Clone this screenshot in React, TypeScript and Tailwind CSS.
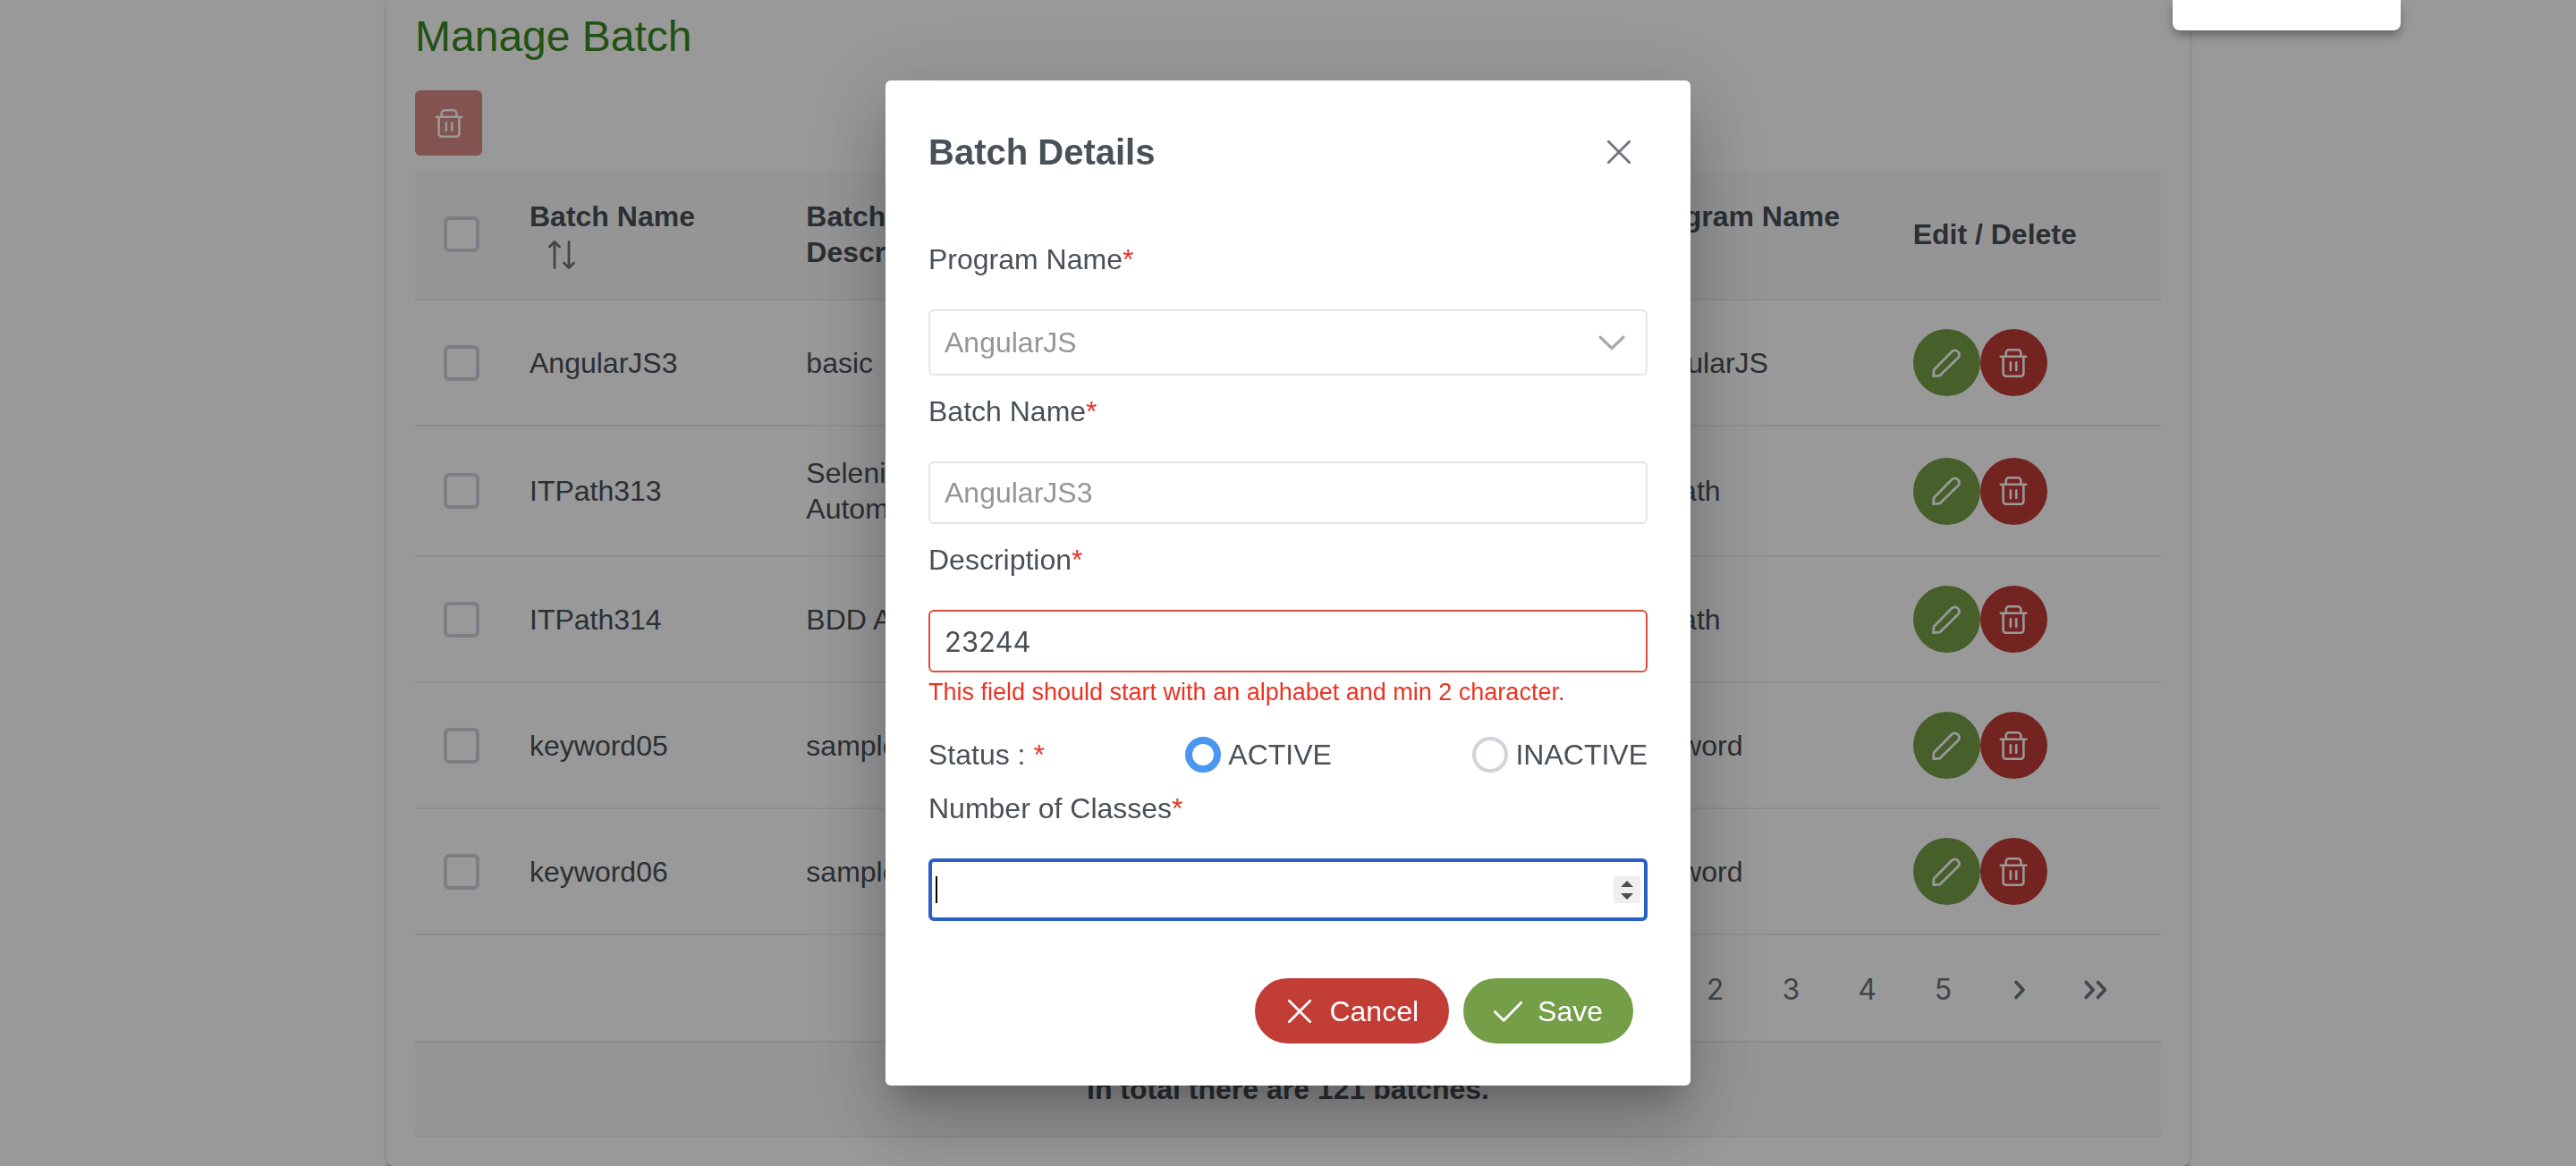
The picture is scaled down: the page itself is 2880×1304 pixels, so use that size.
import type { ReactNode } from "react";

type Row = { name: string; description: string; status: string; classes: number; program: string };

const rows: Row[] = [
  { name: "AngularJS3", description: "basic", status: "ACTIVE", classes: 6, program: "AngularJS" },
  { name: "ITPath313", description: "Selenium Automation", status: "ACTIVE", classes: 6, program: "ITPath" },
  { name: "ITPath314", description: "BDD Automation", status: "ACTIVE", classes: 6, program: "ITPath" },
  { name: "keyword05", description: "sample", status: "ACTIVE", classes: 5, program: "keyword" },
  { name: "keyword06", description: "sample", status: "ACTIVE", classes: 5, program: "keyword" },
];

function Icon({ children, width = 3 }: { children: ReactNode; width?: number }) {
  return (
    <svg
      aria-hidden="true"
      viewBox="0 0 32 32"
      className="size-8 shrink-0"
      fill="none"
      stroke="currentColor"
      strokeWidth={width}
      strokeLinecap="round"
      strokeLinejoin="round"
    >
      {children}
    </svg>
  );
}

const TrashIcon = () => (
  <Icon width={2.6}>
    <path d="M1.7 8.7H30.3M7.7 8.2V4.7a3.4 3.4 0 0 1 3.4-3.4H21a3.4 3.4 0 0 1 3.4 3.4v3.5M4.6 9v18.6A3.1 3.1 0 0 0 7.7 30.7H24.3a3.1 3.1 0 0 0 3.1-3.1V9M12.9 15.4v8.6M19.2 15.4v8.6" />
  </Icon>
);

const PencilIcon = () => (
  <Icon width={2.7}>
    <path d="M1.6 30.6L2 23.8L22.6 2.8A5 5 0 0 1 29.5 9.8L8.6 30.2Z" />
  </Icon>
);

const SortIcon = () => (
  <Icon width={2.8}>
    <path d="M8 30.5V1.5M2.4 7L8 1.5L13.6 7M24 1.5V30.5M18.4 25L24 30.5L29.6 25" />
  </Icon>
);

const CloseIcon = () => (
  <Icon width={2.8}>
    <path d="M4.3 4.3L27.7 27.7M27.7 4.3L4.3 27.7" />
  </Icon>
);

const CheckIcon = () => (
  <Icon width={2.8}>
    <path d="M1.3 16.6L11.2 26.3L30.7 6.2" />
  </Icon>
);

const ChevronDown = () => (
  <Icon width={3.2}>
    <path d="M3 10L16 22.5L29 10" />
  </Icon>
);

function Checkbox({ label }: { label: string }) {
  return (
    <input
      type="checkbox"
      aria-label={label}
      className="block size-10 max-w-none appearance-none rounded-md border-4 border-[#ced4da] bg-white"
    />
  );
}

function HeadCell({ children, sortable = false }: { children: ReactNode; sortable?: boolean }) {
  return (
    <th scope="col" className="px-8 text-left font-bold">
      {children}
      {sortable && (
        <button type="button" aria-label="Sort" className="ml-5 flex h-10 items-center pt-1.5 text-[#6c757d]">
          <SortIcon />
        </button>
      )}
    </th>
  );
}

function PageButton({ label, children }: { label: string; children: ReactNode }) {
  return (
    <button
      type="button"
      aria-label={label}
      className="flex h-[75px] w-[75px] items-center justify-center rounded-md font-[Inter,sans-serif] text-[32px] text-[#6c757d]"
    >
      {children}
    </button>
  );
}

function Label({ htmlFor, children }: { htmlFor: string; children: ReactNode }) {
  return (
    <label htmlFor={htmlFor} className="mt-5 mb-9 block">
      {children}
      <span className="text-[#eb3323]">*</span>
    </label>
  );
}

function Radio({ label, checked = false }: { label: string; checked?: boolean }) {
  return (
    <label className="flex items-center gap-2">
      <input
        type="radio"
        name="status"
        defaultChecked={checked}
        className="size-10 appearance-none rounded-full border-4 border-[#ced4da] bg-white checked:border-8 checked:border-[#4b96f0]"
      />
      {label}
    </label>
  );
}

function ManageBatch() {
  return (
    <main className="mx-auto w-[70%] rounded-b-lg bg-white px-8 pt-[17px] pb-8 shadow-[0_4px_2px_-2px_rgba(0,0,0,0.2),0_2px_2px_rgba(0,0,0,0.14),0_2px_6px_rgba(0,0,0,0.12)]">
      <h1 className="text-[48px] leading-[48px] text-[#3a8722]">Manage Batch</h1>
      <button
        type="button"
        disabled
        aria-label="Delete selected batches"
        className="mt-9 mb-4 flex h-[73px] w-[75px] items-center justify-center rounded-md bg-[#c23d36] text-white opacity-60"
      >
        <TrashIcon />
      </button>
      <table className="w-full table-fixed border-collapse">
        <thead className="bg-[#f8f9fa]">
          <tr className="h-[145px] border-b-2 border-[#e9ecef]">
            <th scope="col" className="w-24 pl-8">
              <Checkbox label="Select all" />
            </th>
            <HeadCell sortable>Batch Name</HeadCell>
            <HeadCell>Batch Description</HeadCell>
            <HeadCell sortable>Batch Status</HeadCell>
            <HeadCell sortable>No. of Classes</HeadCell>
            <HeadCell sortable>Program Name</HeadCell>
            <HeadCell>Edit / Delete</HeadCell>
          </tr>
        </thead>
        <tbody>
          {rows.map((row) => (
            <tr key={row.name} className="h-[141px] border-b-2 border-[#e9ecef]">
              <td className="pl-8">
                <Checkbox label={`Select ${row.name}`} />
              </td>
              <td className="px-8 py-8">{row.name}</td>
              <td className="px-8 py-8">{row.description}</td>
              <td className="px-8 py-8">{row.status}</td>
              <td className="px-8 py-8">{row.classes}</td>
              <td className="px-8 py-8">{row.program}</td>
              <td className="px-8">
                <div className="flex">
                  <button
                    type="button"
                    aria-label={`Edit ${row.name}`}
                    className="flex size-[75px] items-center justify-center rounded-full bg-[#759e49] text-white"
                  >
                    <PencilIcon />
                  </button>
                  <button
                    type="button"
                    aria-label={`Delete ${row.name}`}
                    className="flex size-[75px] items-center justify-center rounded-full bg-[#c23d36] text-white"
                  >
                    <TrashIcon />
                  </button>
                </div>
              </td>
            </tr>
          ))}
        </tbody>
      </table>
      <nav
        aria-label="Pages"
        className="flex h-[120px] items-center justify-end gap-[10px] border-b-2 border-[#e9ecef] pt-1 pr-9"
      >
        <PageButton label="Page 1">1</PageButton>
        <PageButton label="Page 2">2</PageButton>
        <PageButton label="Page 3">3</PageButton>
        <PageButton label="Page 4">4</PageButton>
        <PageButton label="Page 5">5</PageButton>
        <PageButton label="Next page">
          <Icon width={3.6}>
            <path d="M12 7.5L20 16L12 24.5" />
          </Icon>
        </PageButton>
        <PageButton label="Last page">
          <Icon width={3.6}>
            <path d="M5.2 7.5L13.2 16L5.2 24.5M18.4 7.5L26.4 16L18.4 24.5" />
          </Icon>
        </PageButton>
      </nav>
      <div className="border-b-2 border-[#e9ecef] bg-[#f8f9fa] py-8 text-center font-bold">
        In total there are 121 batches.
      </div>
    </main>
  );
}

function BatchDialog() {
  return (
    <div
      role="dialog"
      aria-modal="true"
      aria-labelledby="dialog-title"
      className="w-[900px] rounded-md bg-white shadow-[0_22px_30px_-14px_rgba(0,0,0,0.2),0_48px_76px_6px_rgba(0,0,0,0.14),0_18px_92px_16px_rgba(0,0,0,0.12)]"
    >
      <header className="flex items-center justify-between p-12">
        <h2 id="dialog-title" className="text-[40px] leading-[48px] font-bold">
          Batch Details
        </h2>
        <button type="button" aria-label="Close" className="flex size-16 items-center justify-center text-[#6c757d]">
          <CloseIcon />
        </button>
      </header>
      <form className="px-12">
        <Label htmlFor="program">Program Name</Label>
        <div className="relative">
          <select
            id="program"
            disabled
            className="block h-[74px] w-full appearance-none rounded-md border-2 border-[#e2e5e9] bg-white px-4 text-[#92969a] opacity-100"
          >
            <option>AngularJS</option>
          </select>
          <span className="pointer-events-none absolute inset-y-0 right-6 flex items-center text-[#a6abb0]">
            <ChevronDown />
          </span>
        </div>
        <Label htmlFor="batch">Batch Name</Label>
        <input
          id="batch"
          disabled
          defaultValue="AngularJS3"
          className="block h-[70px] w-full rounded-md border-2 border-[#e2e5e9] bg-white px-4 text-[#92969a]"
        />
        <Label htmlFor="description">Description</Label>
        <input
          id="description"
          defaultValue="23244"
          aria-invalid="true"
          aria-describedby="description-error"
          className="block h-[70px] w-full rounded-md border-2 border-[#dc5040] bg-white px-4 font-[Inter,sans-serif] text-[31px]"
        />
        <p id="description-error" className="mt-1 text-[27px] leading-9 text-[#eb3323]">
          This field should start with an alphabet and min 2 character.
        </p>
        <div role="radiogroup" aria-label="Status" className="mt-8 flex h-10 items-center justify-between">
          <span>
            Status : <span className="text-[#eb3323]">*</span>
          </span>
          <Radio label="ACTIVE" checked />
          <Radio label="INACTIVE" />
        </div>
        <Label htmlFor="classes">Number of Classes</Label>
        <div className="relative">
          <input
            id="classes"
            inputMode="numeric"
            className="block h-[70px] w-full rounded-md border-4 border-[#2860c8] bg-white px-1 caret-transparent outline-none"
          />
          <span className="pointer-events-none absolute inset-y-5 left-2 w-[2px] bg-black" />
          <span className="pointer-events-none absolute inset-y-0 right-2 flex items-center">
            <svg aria-hidden="true" viewBox="0 0 30 30" className="size-[30px] bg-[#efefef]" fill="#4d4d4d">
              <path d="M15 5L22 12H8ZM15 26L22 19H8Z" />
            </svg>
          </span>
        </div>
      </form>
      <footer className="mt-16 flex justify-end gap-4 px-16 pb-[47px]">
        <button
          type="button"
          className="flex h-[73px] items-center gap-[17px] rounded-full border-2 border-[#c23d36] bg-[#c23d36] px-8 text-white"
        >
          <CloseIcon />
          Cancel
        </button>
        <button
          type="button"
          className="flex h-[73px] items-center gap-[17px] rounded-full border-2 border-[#759e49] bg-[#759e49] px-8 text-white"
        >
          <CheckIcon />
          Save
        </button>
      </footer>
    </div>
  );
}

export default function App() {
  return (
    <div className="relative min-h-screen overflow-hidden bg-white font-['Liberation_Sans',Arial,sans-serif] text-[32px] leading-10 text-[#495057]">
      <ManageBatch />
      <div className="fixed inset-0 flex items-center justify-center bg-black/40">
        <BatchDialog />
      </div>
      <div className="fixed top-0 right-[196px] h-[34px] w-[255px] rounded-b-lg bg-white shadow-[0_4px_8px_-2px_rgba(0,0,0,0.2),0_8px_10px_rgba(0,0,0,0.14),0_2px_20px_rgba(0,0,0,0.12)]" />
    </div>
  );
}
